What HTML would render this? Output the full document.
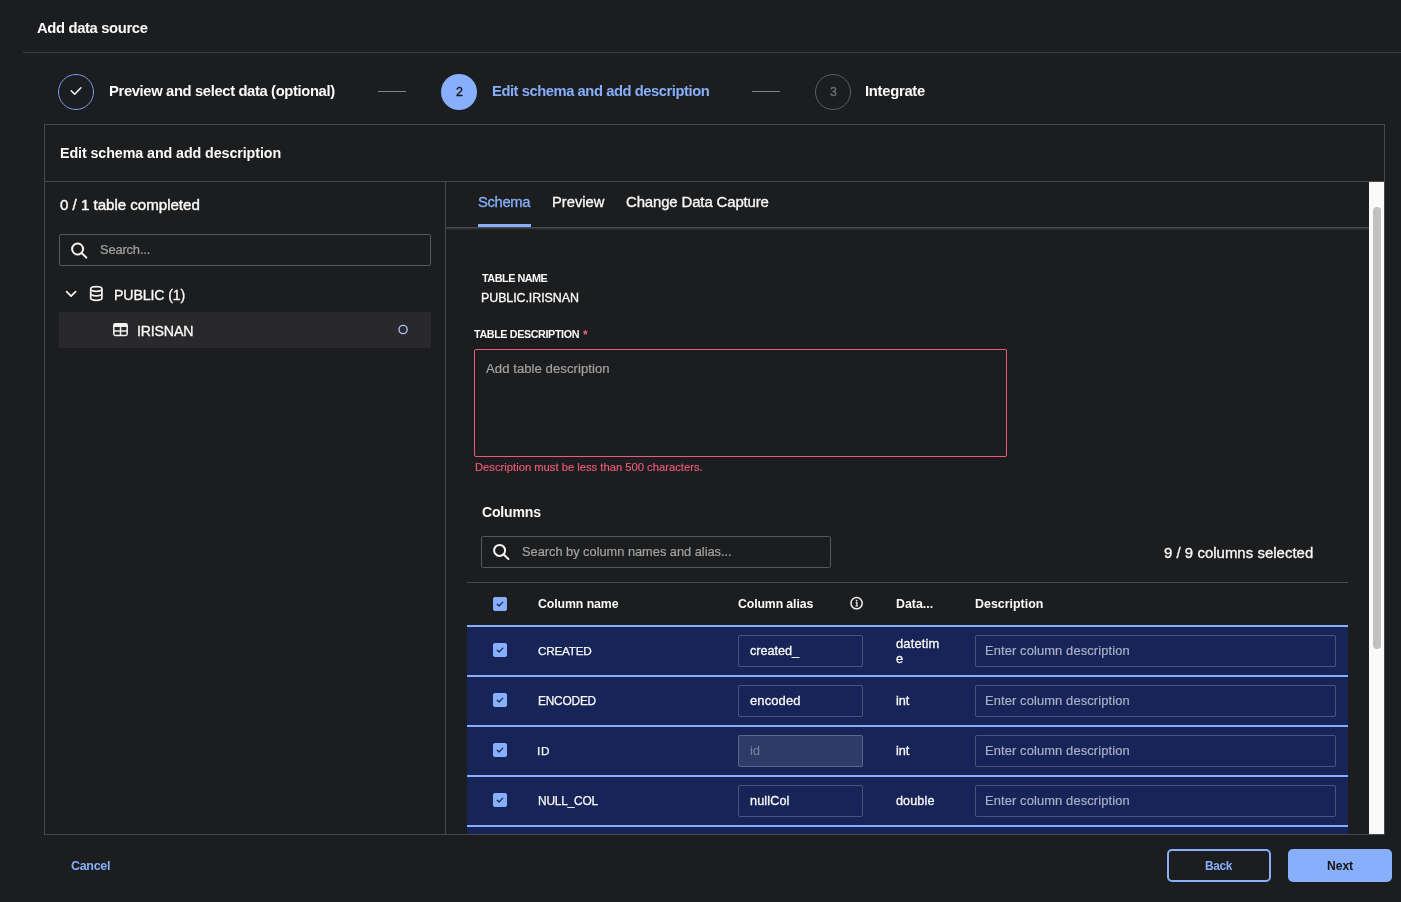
<!DOCTYPE html>
<html><head><meta charset="utf-8"><style>
html,body{margin:0;padding:0;}
body{width:1401px;height:902px;overflow:hidden;background:#1c1d1f;position:relative;font-family:"Liberation Sans",sans-serif;}
.b{position:absolute;box-sizing:border-box;}
.t{position:absolute;white-space:nowrap;line-height:1;will-change:transform;}
</style></head><body>
<div class="b" style="left:23px;top:52px;width:1378px;height:1px;background:#3d3e41"></div><div class="b" style="left:58px;top:74px;width:36px;height:36px;border:1.4px solid #739de8;border-radius:50%"></div><div class="b" style="left:378px;top:91px;width:28px;height:1px;background:#858585"></div><div class="b" style="left:441px;top:74px;width:36px;height:36px;background:#87affc;border-radius:50%"></div><div class="b" style="left:752px;top:91px;width:28px;height:1px;background:#858585"></div><div class="b" style="left:815px;top:74px;width:36px;height:36px;border:1.2px solid #5c5d60;border-radius:50%"></div><div class="b" style="left:44px;top:124px;width:1341px;height:711px;border:1px solid #48484a"></div><div class="b" style="left:45px;top:181px;width:1339px;height:1px;background:#48484a"></div><div class="b" style="left:445px;top:182px;width:1px;height:652px;background:#48484a"></div><div class="b" style="left:59px;top:234px;width:372px;height:32px;border:1px solid #57585b;border-radius:2px"></div><div class="b" style="left:59px;top:312px;width:372px;height:36px;background:#29292b"></div><div class="b" style="left:446px;top:227px;width:923px;height:1px;background:#4a4a4c"></div><div class="b" style="left:446px;top:228px;width:923px;height:1px;background:#343537"></div><div class="b" style="left:446px;top:229px;width:923px;height:1px;background:#242527"></div><div class="b" style="left:478px;top:224px;width:53px;height:3px;background:#87affc"></div><div class="b" style="left:1369px;top:182px;width:15px;height:652px;background:#fafafa"></div><div class="b" style="left:1373px;top:207px;width:8px;height:442px;background:#c1c1c1;border-radius:4px"></div><div class="b" style="left:474px;top:349px;width:533px;height:108px;border:1px solid #f0587a;border-radius:2px"></div><div class="b" style="left:481px;top:536px;width:350px;height:32px;border:1px solid #57585b;border-radius:2px"></div><div class="b" style="left:467px;top:582px;width:881px;height:1px;background:#4a4b4e"></div><div class="b" style="left:467px;top:625px;width:881px;height:209px;background:#172457"></div><div class="b" style="left:493px;top:597px;line-height:0"><svg width="14" height="14" viewBox="0 0 14 14"><rect width="14" height="14" rx="2" fill="#87affc"/><path d="M4.2 7.2 L6.1 9 L9.8 5.2" stroke="#1c2340" stroke-width="1.2" fill="none" stroke-linecap="round" stroke-linejoin="round"/></svg></div><div class="b" style="left:467px;top:625px;width:881px;height:2px;background:#87affc"></div><div class="b" style="left:493px;top:643px;line-height:0"><svg width="14" height="14" viewBox="0 0 14 14"><rect width="14" height="14" rx="2" fill="#87affc"/><path d="M4.2 7.2 L6.1 9 L9.8 5.2" stroke="#1c2340" stroke-width="1.2" fill="none" stroke-linecap="round" stroke-linejoin="round"/></svg></div><div class="b" style="left:738px;top:635px;width:125px;height:32px;border:1px solid rgba(255,255,255,0.22);border-radius:2px"></div><div class="b" style="left:975px;top:635px;width:361px;height:32px;border:1px solid rgba(255,255,255,0.22);border-radius:2px"></div><div class="b" style="left:467px;top:675px;width:881px;height:2px;background:#87affc"></div><div class="b" style="left:493px;top:693px;line-height:0"><svg width="14" height="14" viewBox="0 0 14 14"><rect width="14" height="14" rx="2" fill="#87affc"/><path d="M4.2 7.2 L6.1 9 L9.8 5.2" stroke="#1c2340" stroke-width="1.2" fill="none" stroke-linecap="round" stroke-linejoin="round"/></svg></div><div class="b" style="left:738px;top:685px;width:125px;height:32px;border:1px solid rgba(255,255,255,0.22);border-radius:2px"></div><div class="b" style="left:975px;top:685px;width:361px;height:32px;border:1px solid rgba(255,255,255,0.22);border-radius:2px"></div><div class="b" style="left:467px;top:725px;width:881px;height:2px;background:#87affc"></div><div class="b" style="left:493px;top:743px;line-height:0"><svg width="14" height="14" viewBox="0 0 14 14"><rect width="14" height="14" rx="2" fill="#87affc"/><path d="M4.2 7.2 L6.1 9 L9.8 5.2" stroke="#1c2340" stroke-width="1.2" fill="none" stroke-linecap="round" stroke-linejoin="round"/></svg></div><div class="b" style="left:738px;top:735px;width:125px;height:32px;border:1px solid rgba(255,255,255,0.22);border-radius:2px;background:#2e3a68"></div><div class="b" style="left:975px;top:735px;width:361px;height:32px;border:1px solid rgba(255,255,255,0.22);border-radius:2px"></div><div class="b" style="left:467px;top:775px;width:881px;height:2px;background:#87affc"></div><div class="b" style="left:493px;top:793px;line-height:0"><svg width="14" height="14" viewBox="0 0 14 14"><rect width="14" height="14" rx="2" fill="#87affc"/><path d="M4.2 7.2 L6.1 9 L9.8 5.2" stroke="#1c2340" stroke-width="1.2" fill="none" stroke-linecap="round" stroke-linejoin="round"/></svg></div><div class="b" style="left:738px;top:785px;width:125px;height:32px;border:1px solid rgba(255,255,255,0.22);border-radius:2px"></div><div class="b" style="left:975px;top:785px;width:361px;height:32px;border:1px solid rgba(255,255,255,0.22);border-radius:2px"></div><div class="b" style="left:467px;top:825px;width:881px;height:2px;background:#87affc"></div><div class="b" style="left:1167px;top:849px;width:104px;height:33px;border:2px solid #87affc;border-radius:5px"></div><div class="b" style="left:1288px;top:849px;width:104px;height:33px;background:#87affc;border-radius:5px"></div>
<svg class="b" style="left:0;top:0" width="1401" height="902" viewBox="0 0 1401 902" fill="none"><path d="M71.2 90.8 L74.7 94.2 L80.9 87.8" stroke="#f2f2f2" stroke-width="1.6" stroke-linecap="round" stroke-linejoin="round"/><circle cx="77.6" cy="249" r="5.5" stroke="#f4f4f4" stroke-width="2"/><path d="M81.7 253.1 L86.4 257.6" stroke="#f4f4f4" stroke-width="2" stroke-linecap="round"/><circle cx="499.6" cy="550.4" r="5.5" stroke="#f4f4f4" stroke-width="2"/><path d="M503.7 554.5 L508.4 559" stroke="#f4f4f4" stroke-width="2" stroke-linecap="round"/><path d="M66.6 291.7 L71.1 296.2 L75.6 291.7" stroke="#f2f2f2" stroke-width="1.7" stroke-linecap="round" stroke-linejoin="round"/><ellipse cx="96.3" cy="289" rx="5.6" ry="2.3" stroke="#f2f2f2" stroke-width="1.7"/><path d="M90.7 289 V298 C90.7 299.3 93.2 300.3 96.3 300.3 C99.4 300.3 101.9 299.3 101.9 298 V289" stroke="#f2f2f2" stroke-width="1.7"/><path d="M90.7 293.5 C90.7 294.8 93.2 295.8 96.3 295.8 C99.4 295.8 101.9 294.8 101.9 293.5" stroke="#f2f2f2" stroke-width="1.7"/><rect x="113.8" y="323.8" width="13.4" height="11.6" rx="1.6" stroke="#f2f2f2" stroke-width="1.5"/><rect x="113.8" y="323.8" width="13.4" height="3.2" fill="#f2f2f2"/><path d="M113.8 330.9 H127.2 M120.5 326 V335.4" stroke="#f2f2f2" stroke-width="1.5"/><circle cx="403.1" cy="329.5" r="4.1" stroke="#a8c4fa" stroke-width="1.35"/><circle cx="856.6" cy="603.2" r="5.6" stroke="#f2f2f2" stroke-width="1.5"/><circle cx="856.6" cy="600.6" r="0.9" fill="#f2f2f2"/><path d="M855.6 602.6 H856.9 V606 M855.4 606 H858" stroke="#f2f2f2" stroke-width="1.2"/></svg>
<div class="t" style="left:37.30px;top:21.00px;font-size:14.8px;font-weight:bold;color:#fafafa;letter-spacing:-0.357px">Add data source</div><div class="t" style="left:108.60px;top:84.00px;font-size:14.81px;font-weight:bold;color:#fafafa;letter-spacing:-0.374px">Preview and select data (optional)</div><div class="t" style="left:492.20px;top:84.00px;font-size:14.73px;font-weight:bold;color:#87affc;letter-spacing:-0.432px">Edit schema and add description</div><div class="t" style="left:865.30px;top:84.00px;font-size:14.81px;font-weight:bold;color:#fafafa;letter-spacing:-0.283px">Integrate</div><div class="t" style="left:59.60px;top:146.00px;font-size:14.3px;font-weight:bold;color:#fafafa;letter-spacing:-0.097px">Edit schema and add description</div><div class="t" style="left:59.60px;top:197.00px;font-size:15.11px;font-weight:normal;color:#fafafa;letter-spacing:-0.023px;-webkit-text-stroke:0.4px #fafafa">0 / 1 table completed</div><div class="t" style="left:100.40px;top:244.00px;font-size:12.95px;font-weight:normal;color:#a3a3a3;letter-spacing:-0.185px;-webkit-text-stroke:0.2px #a3a3a3">Search...</div><div class="t" style="left:113.70px;top:288.00px;font-size:14.19px;font-weight:normal;color:#fafafa;letter-spacing:-0.134px;-webkit-text-stroke:0.3px #fafafa">PUBLIC (1)</div><div class="t" style="left:137.20px;top:324.00px;font-size:14.18px;font-weight:normal;color:#fafafa;letter-spacing:-0.175px;-webkit-text-stroke:0.3px #fafafa">IRISNAN</div><div class="t" style="left:477.80px;top:195.00px;font-size:14.81px;font-weight:normal;color:#87affc;letter-spacing:-0.350px;-webkit-text-stroke:0.3px #87affc">Schema</div><div class="t" style="left:551.90px;top:195.00px;font-size:14.74px;font-weight:normal;color:#fafafa;letter-spacing:-0.011px;-webkit-text-stroke:0.3px #fafafa">Preview</div><div class="t" style="left:626.40px;top:195.00px;font-size:14.93px;font-weight:normal;color:#fafafa;letter-spacing:-0.126px;-webkit-text-stroke:0.3px #fafafa">Change Data Capture</div><div class="t" style="left:481.60px;top:273.00px;font-size:10.85px;font-weight:bold;color:#fafafa;letter-spacing:-0.494px">TABLE NAME</div><div class="t" style="left:480.60px;top:292.00px;font-size:12.45px;font-weight:normal;color:#fafafa;letter-spacing:-0.073px;-webkit-text-stroke:0.3px #fafafa">PUBLIC.IRISNAN</div><div class="t" style="left:474.40px;top:329.00px;font-size:10.78px;font-weight:bold;color:#fafafa;letter-spacing:-0.386px">TABLE DESCRIPTION</div><div class="t" style="left:486.00px;top:362.00px;font-size:13.11px;font-weight:normal;color:#a3a3a3;letter-spacing:0.058px;-webkit-text-stroke:0.2px #a3a3a3">Add table description</div><div class="t" style="left:474.50px;top:462.00px;font-size:11.22px;font-weight:normal;color:#f25a7a;letter-spacing:0.000px;-webkit-text-stroke:0.15px #f25a7a">Description must be less than 500 characters.</div><div class="t" style="left:481.60px;top:505.00px;font-size:14.04px;font-weight:bold;color:#fafafa;letter-spacing:-0.170px">Columns</div><div class="t" style="left:522.40px;top:546.00px;font-size:12.8px;font-weight:normal;color:#a3a3a3;letter-spacing:-0.005px;-webkit-text-stroke:0.2px #a3a3a3">Search by column names and alias...</div><div class="t" style="left:1163.50px;top:546.00px;font-size:14.94px;font-weight:normal;color:#fafafa;letter-spacing:0.028px;-webkit-text-stroke:0.3px #fafafa">9 / 9 columns selected</div><div class="t" style="left:538.40px;top:598.00px;font-size:12.31px;font-weight:bold;color:#fafafa;letter-spacing:-0.077px">Column name</div><div class="t" style="left:738.30px;top:598.00px;font-size:12.27px;font-weight:bold;color:#fafafa;letter-spacing:-0.101px">Column alias</div><div class="t" style="left:895.80px;top:598.00px;font-size:12.34px;font-weight:bold;color:#fafafa;letter-spacing:0.038px">Data...</div><div class="t" style="left:974.70px;top:598.00px;font-size:12.42px;font-weight:bold;color:#fafafa;letter-spacing:0.013px">Description</div><div class="t" style="left:538.40px;top:645.00px;font-size:11.75px;font-weight:normal;color:#fafafa;letter-spacing:-0.265px;-webkit-text-stroke:0.25px #fafafa">CREATED</div><div class="t" style="left:749.80px;top:645.00px;font-size:12.68px;font-weight:normal;color:#fafafa;letter-spacing:-0.038px;-webkit-text-stroke:0.3px #fafafa">created_</div><div class="t" style="left:895.80px;top:638.00px;font-size:12.87px;font-weight:normal;color:#fafafa;letter-spacing:0.174px;-webkit-text-stroke:0.3px #fafafa">datetim</div><div class="t" style="left:895.80px;top:653.00px;font-size:12.8px;font-weight:normal;color:#fafafa;letter-spacing:0.000px;-webkit-text-stroke:0.3px #fafafa">e</div><div class="t" style="left:985.40px;top:645.00px;font-size:12.88px;font-weight:normal;color:#a9b0c8;letter-spacing:0.129px;-webkit-text-stroke:0.2px #a9b0c8">Enter column description</div><div class="t" style="left:538.40px;top:696.00px;font-size:11.89px;font-weight:normal;color:#fafafa;letter-spacing:-0.201px;-webkit-text-stroke:0.25px #fafafa">ENCODED</div><div class="t" style="left:749.80px;top:695.00px;font-size:12.96px;font-weight:normal;color:#fafafa;letter-spacing:0.117px;-webkit-text-stroke:0.3px #fafafa">encoded</div><div class="t" style="left:895.80px;top:695.00px;font-size:12.72px;font-weight:normal;color:#fafafa;letter-spacing:-0.050px;-webkit-text-stroke:0.3px #fafafa">int</div><div class="t" style="left:985.40px;top:695.00px;font-size:12.88px;font-weight:normal;color:#a9b0c8;letter-spacing:0.129px;-webkit-text-stroke:0.2px #a9b0c8">Enter column description</div><div class="t" style="left:537.40px;top:745.00px;font-size:11.74px;font-weight:normal;color:#fafafa;letter-spacing:0.840px;-webkit-text-stroke:0.25px #fafafa">ID</div><div class="t" style="left:749.80px;top:744.00px;font-size:13.11px;font-weight:normal;color:#7c839c;letter-spacing:-0.112px">id</div><div class="t" style="left:895.80px;top:745.00px;font-size:12.72px;font-weight:normal;color:#fafafa;letter-spacing:-0.050px;-webkit-text-stroke:0.3px #fafafa">int</div><div class="t" style="left:985.40px;top:745.00px;font-size:12.88px;font-weight:normal;color:#a9b0c8;letter-spacing:0.129px;-webkit-text-stroke:0.2px #a9b0c8">Enter column description</div><div class="t" style="left:538.40px;top:796.00px;font-size:11.92px;font-weight:normal;color:#fafafa;letter-spacing:-0.203px;-webkit-text-stroke:0.25px #fafafa">NULL_COL</div><div class="t" style="left:749.80px;top:795.00px;font-size:12.68px;font-weight:normal;color:#fafafa;letter-spacing:0.113px;-webkit-text-stroke:0.3px #fafafa">nullCol</div><div class="t" style="left:895.80px;top:795.00px;font-size:12.62px;font-weight:normal;color:#fafafa;letter-spacing:0.110px;-webkit-text-stroke:0.3px #fafafa">double</div><div class="t" style="left:985.40px;top:795.00px;font-size:12.88px;font-weight:normal;color:#a9b0c8;letter-spacing:0.129px;-webkit-text-stroke:0.2px #a9b0c8">Enter column description</div><div class="t" style="left:71.25px;top:860.00px;font-size:12.45px;font-weight:bold;color:#87affc;letter-spacing:-0.266px">Cancel</div><div class="t" style="left:1204.80px;top:861.00px;font-size:11.94px;font-weight:bold;color:#87affc;letter-spacing:-0.400px">Back</div><div class="t" style="left:1326.90px;top:860.00px;font-size:12.09px;font-weight:bold;color:#141414;letter-spacing:-0.019px">Next</div><div class="t" style="left:455.60px;top:86.00px;font-size:12.5px;font-weight:normal;color:#141518;letter-spacing:0.000px;-webkit-text-stroke:0.35px #141518">2</div><div class="t" style="left:829.60px;top:86.00px;font-size:12.5px;font-weight:normal;color:#6e6e6e;letter-spacing:0.000px;-webkit-text-stroke:0.35px #6e6e6e">3</div><div class="t" style="left:582.60px;top:329.00px;font-size:12px;font-weight:bold;color:#f0647c;letter-spacing:0.000px">*</div>
</body></html>
